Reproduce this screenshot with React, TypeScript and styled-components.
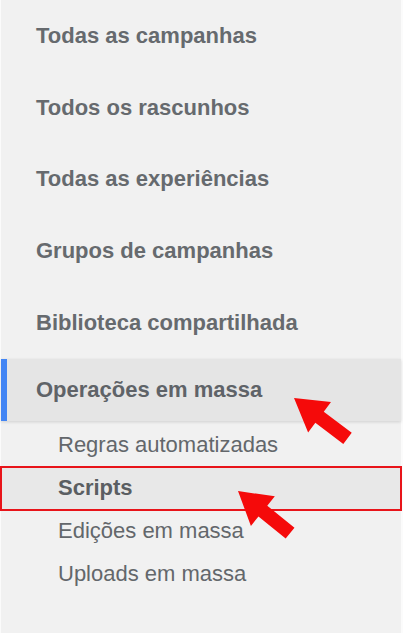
import React from "react";
import styled, { createGlobalStyle } from "styled-components";

const GlobalStyle = createGlobalStyle`
  html, body {
    margin: 0;
    padding: 0;
    background: #fbfbfb;
    font-family: "Liberation Sans", Arial, sans-serif;
  }
`;

const Page = styled.div`
  position: relative;
  width: 403px;
  height: 633px;
  overflow: hidden;
`;

const Sidebar = styled.nav`
  margin-left: 1px;
  width: 400px;
  height: 633px;
  background: #f1f1f1;
  display: flex;
  flex-direction: column;
`;

const MainItem = styled.div<{ $active?: boolean }>`
  position: relative;
  height: ${(p) => (p.$active ? "62px" : "71.75px")};
  flex: none;
  display: flex;
  align-items: center;
  padding-left: 35px;
  font-size: 22px;
  font-weight: 700;
  color: ${(p) => (p.$active ? "#5f6368" : "#666a6e")};
  background: ${(p) => (p.$active ? "#e5e5e5" : "transparent")};
  box-shadow: ${(p) => (p.$active ? "0 1px 3px rgba(0,0,0,0.14)" : "none")};
  border-left: ${(p) => (p.$active ? "6px solid #4285f4" : "0")};
  margin-left: 0;
  ${(p) => (p.$active ? "padding-left: 29px;" : "")}
`;

const SubList = styled.div`
  display: flex;
  flex-direction: column;
  padding-top: 3px;
`;

const SubItem = styled.div<{ $highlighted?: boolean }>`
  height: 43px;
  display: flex;
  align-items: center;
  padding-left: 57px;
  font-size: 22px;
  font-weight: ${(p) => (p.$highlighted ? 700 : 400)};
  color: ${(p) => (p.$highlighted ? "#5a5e62" : "#63676b")};
  background: ${(p) => (p.$highlighted ? "#e8e8e8" : "transparent")};
  box-shadow: ${(p) => (p.$highlighted ? "0 0 0 1px #e8141a, inset 0 0 0 1px #e8141a" : "none")};
  margin-left: ${(p) => (p.$highlighted ? "0" : "0")};
`;

const ArrowLayer = styled.svg`
  position: absolute;
  left: 0;
  top: 0;
  width: 403px;
  height: 633px;
  pointer-events: none;
`;

const Arrow = ({ x, y, angle }: { x: number; y: number; angle: number }) => (
  <polygon
    points="0,0 32,-19 32,-7 67,-7 67,7 32,7 32,19"
    fill="#f50a0a"
    transform={`translate(${x} ${y}) rotate(${angle})`}
  />
);

const mainItems = [
  "Todas as campanhas",
  "Todos os rascunhos",
  "Todas as experiências",
  "Grupos de campanhas",
  "Biblioteca compartilhada",
];

const subItems = [
  "Regras automatizadas",
  "Scripts",
  "Edições em massa",
  "Uploads em massa",
];

export default function App() {
  return (
    <Page>
      <GlobalStyle />
      <Sidebar>
        {mainItems.map((t) => (
          <MainItem key={t}>{t}</MainItem>
        ))}
        <MainItem $active>Operações em massa</MainItem>
        <SubList>
          {subItems.map((t) => (
            <SubItem key={t} $highlighted={t === "Scripts"}>
              {t}
            </SubItem>
          ))}
        </SubList>
      </Sidebar>
      <ArrowLayer viewBox="0 0 403 633">
        <Arrow x={294} y={398} angle={37} />
        <Arrow x={238} y={491} angle={39} />
      </ArrowLayer>
    </Page>
  );
}
